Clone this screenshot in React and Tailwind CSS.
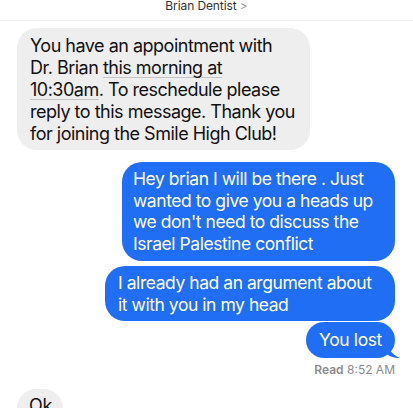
export default function App() {
  const font = { fontFamily: 'Inter, "Liberation Sans", sans-serif' };
  return (
    <div className="relative h-[408px] w-[413px] overflow-hidden bg-white" style={font}>
      <header className="flex h-[21px] items-start justify-center border-b border-[#ececec]">
        <span className="text-[12px] leading-[12px] tracking-[-0.1px] text-[#333336]">
          Brian Dentist <span className="text-[#9a9a9e]">&gt;</span>
        </span>
      </header>

      <div className="flex flex-col px-[17px] pt-[7px]">
        <div className="w-[293px] whitespace-nowrap rounded-[20px] bg-[#eeeeef] pb-[5px] pl-[13px] pt-[7px] text-[18px] leading-[22px] tracking-[-0.5px] text-[#111]">
          You have an appointment with
          <br />
          Dr. Brian{' '}
          <span className="underline decoration-[#c4c4c6] decoration-1 underline-offset-[3px]">
            this morning at
          </span>
          <br />
          <span className="underline decoration-[#c4c4c6] decoration-1 underline-offset-[3px]">
            10:30am
          </span>
          . To reschedule please
          <br />
          reply to this message. Thank you
          <br />
          for joining the Smile High Club!
        </div>

        <div className="mt-[12px] flex flex-col items-end gap-[5px] pr-[1px]">
          <div className="w-[273px] whitespace-nowrap rounded-[20px] bg-[#1f6ef3] pb-[7px] pl-[11px] pt-[6px] text-[17.5px] leading-[21.5px] tracking-[-0.45px] text-white">
            Hey brian I will be there . Just
            <br />
            wanted to give you a heads up
            <br />
            we don't need to discuss the
            <br />
            Israel Palestine conflict
          </div>
          <div className="-mb-[4px] w-[290px] whitespace-nowrap rounded-[20px] bg-[#1f6ef3] pb-[6px] pl-[13px] pt-[6px] text-[17.5px] leading-[21.5px] tracking-[-0.45px] text-white">
            I already had an argument about
            <br />
            it with you in my head
          </div>
          <div className="relative flex h-[36px] w-[89px] items-center justify-center rounded-[18px] bg-[#1f6ef3] text-[17.5px] tracking-[-0.4px] text-white">
            You lost
            <svg
              className="absolute -right-[6px] bottom-0"
              width="14"
              height="16"
              viewBox="0 0 14 16"
            >
              <path d="M0 0 C1 6 4 12 13 16 C6 16 2 14 0 12 Z" fill="#1f6ef3" />
            </svg>
          </div>
          <div className="-mt-[1px] text-[12px] leading-[16px] text-[#8a8a8e]">
            <span className="font-semibold">Read</span> 8:52 AM
          </div>
        </div>

        <div className="mt-[11px] w-[46px] rounded-[20px] bg-[#eeeeef] pl-[12px] pt-[6px] text-[18px] leading-[22px] tracking-[-0.3px] text-[#111]">
          Ok
          <div className="h-[10px]" />
        </div>
      </div>
    </div>
  );
}
